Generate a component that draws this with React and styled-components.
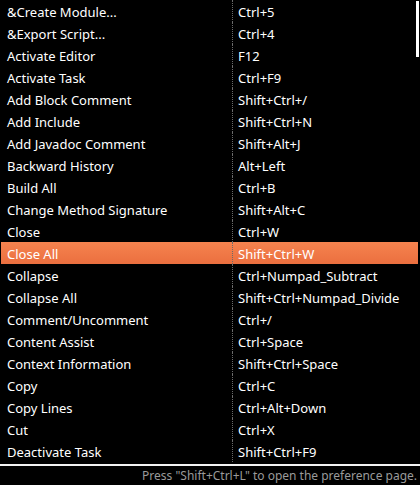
import React from "react";
import styled, { createGlobalStyle } from "styled-components";

const GlobalStyle = createGlobalStyle`
    html, body {
        margin: 0;
        padding: 0;
        background: #000;
    }
    body {
        font-family: "Noto Sans", "DejaVu Sans", sans-serif;
    }
`;

const Popup = styled.div`
    width: 420px;
    height: 485px;
    background: #000;
    display: flex;
    flex-direction: column;
    overflow: hidden;
`;

const List = styled.div`
    position: relative;
    height: 464px;
    padding: 0 2px 0 1px;
    border-bottom: 2px solid #f2f2f2;
    overflow: hidden;
`;

const Row = styled.div`
    display: grid;
    grid-template-columns: 231px 1fr;
    height: 22px;
    color: #fff;
    font-size: 13px;
    background: ${props => props.selected
        ? "linear-gradient(to bottom, #f5834f, #eb6f3f)"
        : "transparent"};
`;

const Cell = styled.div`
    display: flex;
    align-items: center;
    padding-top: 1px;
    padding-left: ${props => props.second ? "5px" : "6px"};
    border-left: ${props => props.second ? "1px dotted #6a6a6a" : "none"};
    white-space: nowrap;
`;

const ScrollThumb = styled.div`
    position: absolute;
    top: 1px;
    right: 1px;
    width: 3px;
    height: 56px;
    background: #fff;
`;

const StatusBar = styled.div`
    flex: 1;
    display: flex;
    align-items: center;
    justify-content: flex-end;
    padding-right: 3px;
    color: #9a9a9a;
    font-size: 12px;
`;

const commands = [
    ["&Create Module...", "Ctrl+5"],
    ["&Export Script...", "Ctrl+4"],
    ["Activate Editor", "F12"],
    ["Activate Task", "Ctrl+F9"],
    ["Add Block Comment", "Shift+Ctrl+/"],
    ["Add Include", "Shift+Ctrl+N"],
    ["Add Javadoc Comment", "Shift+Alt+J"],
    ["Backward History", "Alt+Left"],
    ["Build All", "Ctrl+B"],
    ["Change Method Signature", "Shift+Alt+C"],
    ["Close", "Ctrl+W"],
    ["Close All", "Shift+Ctrl+W"],
    ["Collapse", "Ctrl+Numpad_Subtract"],
    ["Collapse All", "Shift+Ctrl+Numpad_Divide"],
    ["Comment/Uncomment", "Ctrl+/"],
    ["Content Assist", "Ctrl+Space"],
    ["Context Information", "Shift+Ctrl+Space"],
    ["Copy", "Ctrl+C"],
    ["Copy Lines", "Ctrl+Alt+Down"],
    ["Cut", "Ctrl+X"],
    ["Deactivate Task", "Shift+Ctrl+F9"],
];

const App = () => {
    return (
        <React.Fragment>
            <GlobalStyle />
            <Popup>
                <List>
                    {commands.map(([name, keys]) => (
                        <Row key={name} selected={name === "Close All"}>
                            <Cell>{name}</Cell>
                            <Cell second>{keys}</Cell>
                        </Row>
                    ))}
                    <ScrollThumb />
                </List>
                <StatusBar>Press "Shift+Ctrl+L" to open the preference page.</StatusBar>
            </Popup>
        </React.Fragment>
    );
};

export default App;
